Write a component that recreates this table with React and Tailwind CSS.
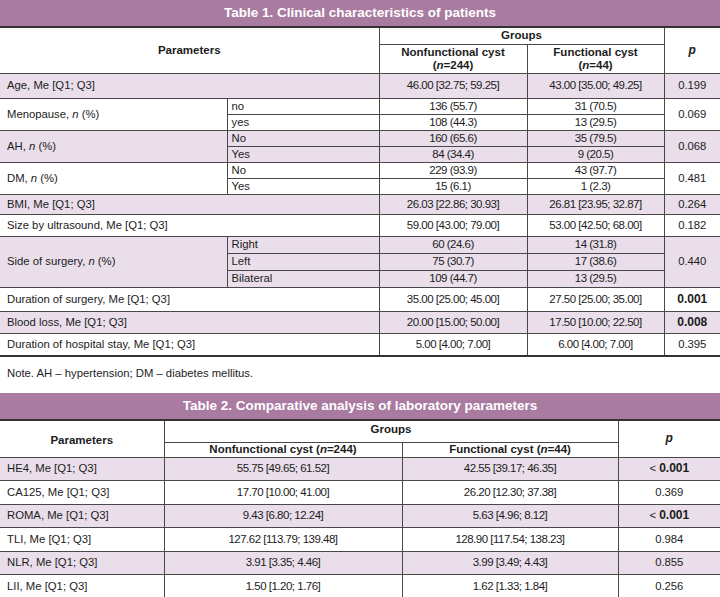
import React from 'react';

const font = { fontFamily: '"Liberation Sans", Arial, sans-serif' };

const t1 = [
    { label: 'Age, Me [Q1; Q3]', a: '46.00 [32.75; 59.25]', b: '43.00 [35.00; 49.25]', p: '0.199', h: 25, bg: true },
    {
        label: <>Menopause, <i>n</i> (%)</>,
        sub: [['no', '136 (55.7)', '31 (70.5)'], ['yes', '108 (44.3)', '13 (29.5)']],
        p: '0.069', h: 16, bg: false
    },
    {
        label: <>AH, <i>n</i> (%)</>,
        sub: [['No', '160 (65.6)', '35 (79.5)'], ['Yes', '84 (34.4)', '9 (20.5)']],
        p: '0.068', h: 16, bg: true
    },
    {
        label: <>DM, <i>n</i> (%)</>,
        sub: [['No', '229 (93.9)', '43 (97.7)'], ['Yes', '15 (6.1)', '1 (2.3)']],
        p: '0.481', h: 16, bg: false
    },
    { label: 'BMI, Me [Q1; Q3]', a: '26.03 [22.86; 30.93]', b: '26.81 [23.95; 32.87]', p: '0.264', h: 20, bg: true },
    { label: 'Size by ultrasound, Me [Q1; Q3]', a: '59.00 [43.00; 79.00]', b: '53.00 [42.50; 68.00]', p: '0.182', h: 22, bg: false },
    {
        label: <>Side of surgery, <i>n</i> (%)</>,
        sub: [['Right', '60 (24.6)', '14 (31.8)'], ['Left', '75 (30.7)', '17 (38.6)'], ['Bilateral', '109 (44.7)', '13 (29.5)']],
        p: '0.440', h: 17, bg: true
    },
    { label: 'Duration of surgery, Me [Q1; Q3]', a: '35.00 [25.00; 45.00]', b: '27.50 [25.00; 35.00]', p: '0.001', bold: true, h: 24, bg: false },
    { label: 'Blood loss, Me [Q1; Q3]', a: '20.00 [15.00; 50.00]', b: '17.50 [10.00; 22.50]', p: '0.008', bold: true, h: 22, bg: true },
    { label: 'Duration of hospital stay, Me [Q1; Q3]', a: '5.00 [4.00; 7.00]', b: '6.00 [4.00; 7.00]', p: '0.395', h: 23, bg: false }
];

const t2 = [
    { label: 'HE4, Me [Q1; Q3]', a: '55.75 [49.65; 61.52]', b: '42.55 [39.17; 46.35]', p: '0.001', lt: true, bg: true },
    { label: 'CA125, Me [Q1; Q3]', a: '17.70 [10.00; 41.00]', b: '26.20 [12.30; 37.38]', p: '0.369', bg: false },
    { label: 'ROMA, Me [Q1; Q3]', a: '9.43 [6.80; 12.24]', b: '5.63 [4.96; 8.12]', p: '0.001', lt: true, bg: true },
    { label: 'TLI, Me [Q1; Q3]', a: '127.62 [113.79; 139.48]', b: '128.90 [117.54; 138.23]', p: '0.984', bg: false },
    { label: 'NLR, Me [Q1; Q3]', a: '3.91 [3.35; 4.46]', b: '3.99 [3.49; 4.43]', p: '0.855', bg: true },
    { label: 'LII, Me [Q1; Q3]', a: '1.50 [1.20; 1.76]', b: '1.62 [1.33; 1.84]', p: '0.256', bg: false }
];

const cell = 'border border-[#484848] align-middle p-0';
const num = 'text-center text-[11.5px] tracking-[-0.5px]';

const TitleBar = ({ children }) => (
    <div className="h-[28px] bg-[#a97ba1] border-b-2 border-[#333] flex items-center justify-center text-white font-bold text-[13.5px]">
        {children}
    </div>
);

const Table1 = () => (
    <table className="w-[720px] table-fixed border-collapse text-[11.3px] leading-[13px] text-[#1c1c1c]">
        <colgroup>
            <col className="w-[227px]" />
            <col className="w-[152px]" />
            <col className="w-[148px]" />
            <col className="w-[137px]" />
            <col className="w-[56px]" />
        </colgroup>
        <thead>
            <tr className="h-[16px]">
                <th colSpan={2} rowSpan={2} className="border-b border-[#484848] border-r font-bold text-center text-[11.5px] p-0">Parameters</th>
                <th colSpan={2} className={`${cell} border-t-0 font-bold text-[11.5px] leading-none`}>Groups</th>
                <th rowSpan={2} className={`${cell} border-t-0 border-r-0 font-bold italic text-[12px]`}>p</th>
            </tr>
            <tr className="h-[29px]">
                <th className={`${cell} font-bold text-[11.5px] leading-[13px]`}>Nonfunctional cyst<br />(<i>n</i>=244)</th>
                <th className={`${cell} font-bold text-[11.5px] leading-[13px]`}>Functional cyst<br />(<i>n</i>=44)</th>
            </tr>
        </thead>
        <tbody className="border-b-2 border-[#333]">
            {t1.map((r, i) => {
                const bg = r.bg ? 'bg-[#e9deea]' : 'bg-white';
                const pCell = (span) => (
                    <td rowSpan={span} className={`${cell} border-r-0 text-center ${r.bold ? 'font-bold text-[12px]' : ''}`}>{r.p}</td>
                );
                if (!r.sub) {
                    return (
                        <tr key={i} className={bg} style={{ height: r.h }}>
                            <td colSpan={2} className={`${cell} border-l-0 pl-[7px]`}>{r.label}</td>
                            <td className={`${cell} ${num}`}>{r.a}</td>
                            <td className={`${cell} ${num}`}>{r.b}</td>
                            {pCell(1)}
                        </tr>
                    );
                }
                return r.sub.map((s, j) => (
                    <tr key={`${i}-${j}`} className={bg} style={{ height: r.h }}>
                        {j === 0 && (
                            <td rowSpan={r.sub.length} className={`${cell} border-l-0 pl-[7px]`}>{r.label}</td>
                        )}
                        <td className={`${cell} pl-[4px]`}>{s[0]}</td>
                        <td className={`${cell} ${num}`}>{s[1]}</td>
                        <td className={`${cell} ${num}`}>{s[2]}</td>
                        {j === 0 && pCell(r.sub.length)}
                    </tr>
                ));
            })}
        </tbody>
    </table>
);

const Table2 = () => (
    <table className="w-[720px] table-fixed border-collapse text-[11.3px] leading-[13px] text-[#1c1c1c]">
        <colgroup>
            <col className="w-[164px]" />
            <col className="w-[238px]" />
            <col className="w-[216px]" />
            <col className="w-[102px]" />
        </colgroup>
        <thead>
            <tr className="h-[21px]">
                <th rowSpan={2} className={`${cell} border-t-0 border-l-0 font-bold text-[11.5px] pt-[4px]`}>Parameters</th>
                <th colSpan={2} className="border border-[#484848] border-t-0 align-top pt-[2px] font-bold text-[11.5px] text-center">Groups</th>
                <th rowSpan={2} className={`${cell} border-t-0 border-r-0 font-bold italic text-[12px]`}>p</th>
            </tr>
            <tr className="h-[15px]">
                <th className={`${cell} font-bold text-[11.5px] leading-none`}>Nonfunctional cyst (<i>n</i>=244)</th>
                <th className={`${cell} font-bold text-[11.5px] leading-none`}>Functional cyst (<i>n</i>=44)</th>
            </tr>
        </thead>
        <tbody>
            {t2.map((r, i) => (
                <tr key={i} className={`h-[23.5px] ${r.bg ? 'bg-[#e9deea]' : 'bg-white'}`}>
                    <td className={`${cell} border-l-0 pl-[7px]`}>{r.label}</td>
                    <td className={`${cell} ${num}`}>{r.a}</td>
                    <td className={`${cell} ${num}`}>{r.b}</td>
                    <td className={`${cell} border-r-0 text-center`}>
                        {r.lt ? <>&lt; <b className="text-[12px]">{r.p}</b></> : r.p}
                    </td>
                </tr>
            ))}
        </tbody>
    </table>
);

const App = () => {
    return (
        <div className="w-[720px] h-[597px] overflow-hidden bg-white" style={font}>
            <TitleBar>Table 1. Clinical characteristics of patients</TitleBar>
            <Table1 />
            <p className="text-[11.3px] text-[#1c1c1c] pl-[7px] pt-[8px] h-[36px]">Note. AH – hypertension; DM – diabetes mellitus.</p>
            <TitleBar>Table 2. Comparative analysis of laboratory parameters</TitleBar>
            <Table2 />
        </div>
    );
};

export default App;
